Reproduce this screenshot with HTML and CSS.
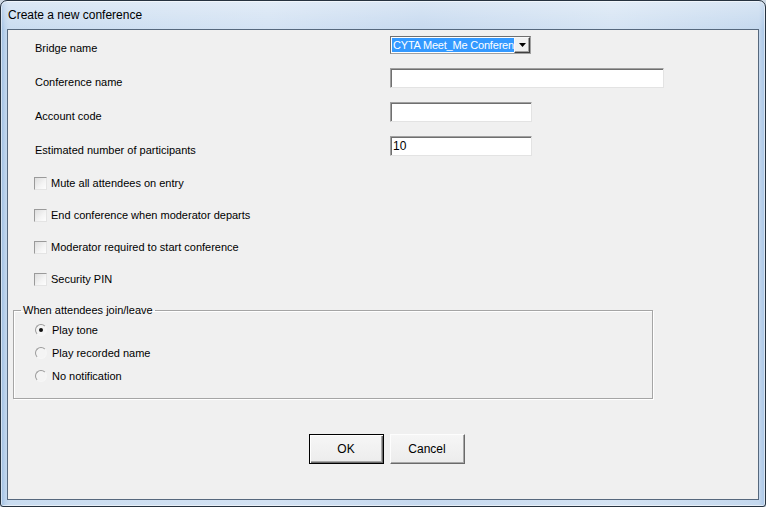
FILE: index.html
```html
<!DOCTYPE html>
<html>
<head>
<meta charset="utf-8">
<title>Create a new conference</title>
<link rel="stylesheet" href="styles.css">
</head>
<body>
<div class="window">
  <div class="titlebar"><span class="title">Create a new conference</span></div>
  <div class="client">
    <div class="fields">
      <div class="row">
        <span class="label">Bridge name</span>
        <div class="combo">
          <span class="combo-text"><span class="sel">CYTA Meet_Me Conference</span></span>
          <span class="combo-btn"><svg width="7" height="4" viewBox="0 0 7 4"><polygon points="0,0 7,0 3.5,4" fill="#000"/></svg></span>
        </div>
      </div>
      <div class="row">
        <span class="label">Conference name</span>
        <div class="textbox wide"></div>
      </div>
      <div class="row">
        <span class="label">Account code</span>
        <div class="textbox"></div>
      </div>
      <div class="row">
        <span class="label">Estimated number of participants</span>
        <div class="textbox">10</div>
      </div>
    </div>
    <div class="checks">
      <div class="check"><span class="box"></span><span>Mute all attendees on entry</span></div>
      <div class="check"><span class="box"></span><span>End conference when moderator departs</span></div>
      <div class="check"><span class="box"></span><span>Moderator required to start conference</span></div>
      <div class="check"><span class="box"></span><span>Security PIN</span></div>
    </div>
    <fieldset class="group">
      <legend>When attendees join/leave</legend>
      <div class="radios">
        <div class="radio"><span class="dot checked"></span><span>Play tone</span></div>
        <div class="radio"><span class="dot"></span><span>Play recorded name</span></div>
        <div class="radio"><span class="dot"></span><span>No notification</span></div>
      </div>
    </fieldset>
    <div class="buttons">
      <div class="btn default">OK</div>
      <div class="btn">Cancel</div>
    </div>
  </div>
</div>
</body>
</html>
```
FILE: styles.css
```css
html, body {
  margin: 0;
  padding: 0;
  background: #cfd9e4;
}
body {
  width: 766px;
  height: 507px;
  overflow: hidden;
  font-family: "Liberation Sans", Arial, sans-serif;
  font-size: 11px;
  color: #000;
}
.window {
  box-sizing: border-box;
  width: 766px;
  height: 507px;
  border: 1px solid #26323f;
  border-radius: 7px 7px 3px 3px;
  display: flex;
  flex-direction: column;
  background:
    linear-gradient(to bottom, rgba(255,255,255,0.35) 0, rgba(255,255,255,0) 30px),
    linear-gradient(90deg, #9cbde2 0, #bcd3ec 4px, #c9dcf0 8px, #d3e2f3 35%, #c6d9ef 55%, #d4e3f3 80%, #c4d8ee calc(100% - 6px), #a9c5e6 100%);
  box-shadow: inset 0 0 0 1px rgba(255,255,255,0.55);
}
.titlebar {
  height: 28px;
  flex: none;
  padding-left: 7px;
  line-height: 28px;
}
.title {
  font-size: 12px;
  color: #000;
}
.client {
  flex: 1;
  margin: 0 6px 6px 6px;
  border: 1px solid #56687d;
  background: #f0f0f0;
  padding: 4px 0 0 5px;
  display: flex;
  flex-direction: column;
}
.fields .row {
  display: flex;
  align-items: flex-start;
  height: 34px;
  padding-left: 22px;
}
.fields .row:last-child {
  height: 31px;
}
.label {
  width: 355px;
  flex: none;
  padding-top: 8px;
  line-height: 13px;
}
.combo {
  box-sizing: border-box;
  margin-top: 2px;
  width: 141px;
  height: 18px;
  border: 1px solid;
  border-color: #6f6f6f #a0a0a0 #a0a0a0 #6f6f6f;
  background: #fff;
  display: flex;
  align-items: center;
}
.combo-text {
  flex: 1;
  overflow: hidden;
  white-space: nowrap;
  padding-left: 1px;
  height: 14px;
}
.sel {
  display: inline-block;
  background: #3399ff;
  color: #fff;
  font-size: 11px;
  letter-spacing: -0.2px;
  line-height: 14px;
  padding-left: 1px;
}
.combo-btn {
  box-sizing: border-box;
  flex: none;
  width: 16px;
  height: 16px;
  background: #f0f0f0;
  border: 1px solid;
  border-color: #f8f8f8 #404040 #404040 #f8f8f8;
  box-shadow: inset -1px -1px 0 #a0a0a0;
  display: flex;
  align-items: center;
  justify-content: center;
}
.textbox {
  box-sizing: border-box;
  width: 142px;
  height: 20px;
  background: #fff;
  border: 1px solid;
  border-color: #a0a0a0 #e3e3e3 #e3e3e3 #a0a0a0;
  box-shadow: inset 1px 1px 0 #6f6f6f;
  font-size: 12px;
  line-height: 17px;
  padding: 1px 0 0 2px;
}
.textbox.wide {
  width: 274px;
}
.checks {
  padding-left: 21px;
}
.check {
  display: flex;
  align-items: center;
  height: 32px;
}
.box {
  box-sizing: border-box;
  width: 13px;
  height: 13px;
  margin-right: 4px;
  border: 1px solid;
  border-color: #9a9a9a #e4e4e4 #e4e4e4 #9a9a9a;
  background: linear-gradient(135deg, #dedede 0%, #f4f4f4 60%, #fdfdfd 100%);
  flex: none;
}
.group {
  box-sizing: border-box;
  margin: 9px 0 0 0;
  padding: 0;
  width: 640px;
  border: 1px solid #a5a5a5;
  box-shadow: inset 1px 1px 0 #fff, 1px 1px 0 #fff;
  min-width: 0;
}
.group legend {
  margin-left: 7px;
  padding: 0 2px;
  line-height: 13px;
  font-size: 11px;
}
.radios {
  padding: 1px 0 11px 21px;
}
.radio {
  display: flex;
  align-items: center;
  height: 23px;
}
.dot {
  box-sizing: border-box;
  width: 12px;
  height: 12px;
  margin-right: 5px;
  border-radius: 50%;
  border: 1px solid;
  border-color: #9a9a9a #f6f6f6 #f6f6f6 #9a9a9a;
  background: #f4f4f4;
  position: relative;
  flex: none;
}
.dot.checked::after {
  content: "";
  position: absolute;
  left: 3px;
  top: 3px;
  width: 4px;
  height: 4px;
  border-radius: 50%;
  background: #111;
}
.buttons {
  margin-top: 35px;
  display: flex;
  justify-content: center;
  gap: 6px;
  padding-left: 2px;
}
.btn {
  box-sizing: border-box;
  width: 75px;
  height: 30px;
  display: flex;
  align-items: center;
  justify-content: center;
  background: linear-gradient(to bottom, #f6f6f6, #ececec);
  border: 1px solid;
  border-color: #fdfdfd #6a6a6a #6a6a6a #fdfdfd;
  box-shadow: inset -1px -1px 0 #a8a8a8;
  font-size: 12px;
}
.btn.default {
  border: 1px solid #000;
  box-shadow: inset 1px 1px 0 #fff, inset -1px -1px 0 #6a6a6a, inset -2px -2px 0 #a8a8a8;
}
```
